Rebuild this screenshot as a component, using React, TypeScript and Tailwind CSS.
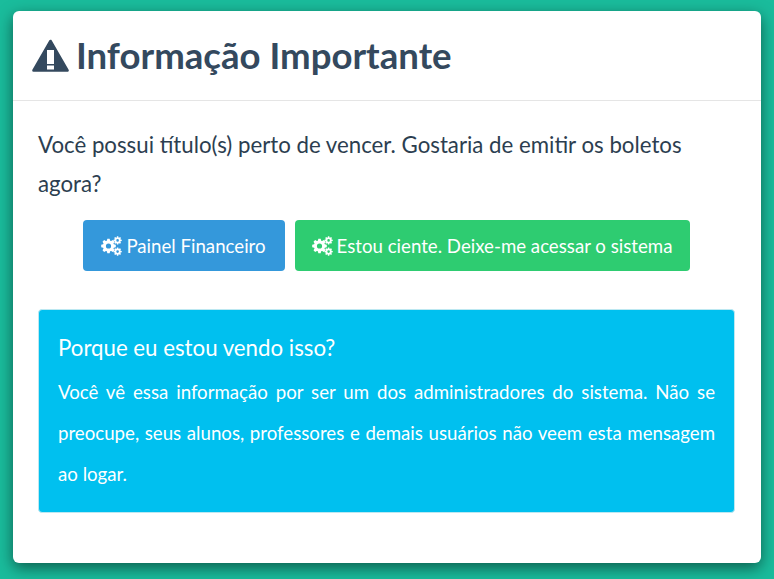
// gear outline with a round hole, drawn on a plain coordinate grid
function gearPath(cx: number, cy: number, outer: number, inner: number, hole: number, teeth: number) {
  const pts: string[] = [];
  const step = (Math.PI * 2) / teeth;
  for (let i = 0; i < teeth; i++) {
    const a = i * step;
    const corners: [number, number][] = [
      [inner, a - step * 0.38],
      [outer, a - step * 0.2],
      [outer, a + step * 0.2],
      [inner, a + step * 0.38],
    ];
    corners.forEach(([r, t]) => pts.push(`${(cx + r * Math.cos(t)).toFixed(2)} ${(cy + r * Math.sin(t)).toFixed(2)}`));
  }
  const ring = `M${cx - hole} ${cy}a${hole} ${hole} 0 1 0 ${hole * 2} 0a${hole} ${hole} 0 1 0 ${-hole * 2} 0Z`;
  return `M${pts.join('L')}Z${ring}`;
}

function Cogs() {
  return (
    <svg viewBox="0 0 21 20" className="h-[20px] w-[21px] shrink-0" fill="currentColor" fillRule="evenodd" aria-hidden="true">
      <path d={gearPath(7.5, 10, 7.4, 5.6, 2.6, 8)} />
      <path d={gearPath(16.6, 4.4, 4.2, 3.1, 1.3, 8)} />
      <path d={gearPath(16.6, 15.6, 4.2, 3.1, 1.3, 8)} />
    </svg>
  );
}

function Warning() {
  return (
    <svg viewBox="0 0 37 33" className="h-[33px] w-[37px] shrink-0" aria-hidden="true">
      <path d="M18.5 2 L35.5 31.5 H1.5 Z" fill="#34495e" stroke="#34495e" strokeWidth="2.6" strokeLinejoin="round" />
      <rect x="15" y="11" width="7" height="14" fill="#fff" />
      <rect x="15" y="26.5" width="7" height="4" fill="#fff" />
    </svg>
  );
}

export default function App() {
  return (
    <div className="h-[579px] overflow-hidden bg-[#1abc9c] px-[13px] pt-[11px] font-['Lato',sans-serif] text-[#2c3e50]">
      <div className="h-[552px] rounded-md bg-white shadow-[0_5px_15px_rgba(0,0,0,0.5)]">
        <div className="flex h-[90px] items-center gap-[7px] border-b border-[#e5e5e5] pb-[1px] pl-[19px]">
          <Warning />
          <h4 className="text-[36.6px] leading-none font-bold text-[#34495e]">Informação Importante</h4>
        </div>
        <div className="pt-[24px] pr-[27px] pl-[25px]">
          <p className="text-[22.25px] leading-[39px]">
            Você possui título(s) perto de vencer. Gostaria de emitir os boletos agora?
          </p>
          <div className="mt-[17px] flex justify-center gap-[10px]">
            <button className="flex h-[51px] w-[202px] items-center justify-center gap-[4px] rounded-[4px] bg-[#3498db] text-[18.67px] text-white">
              <Cogs /> Painel Financeiro
            </button>
            <button className="flex h-[51px] w-[395px] items-center justify-center gap-[4px] rounded-[4px] bg-[#2ecc71] text-[18.67px] text-white">
              <Cogs /> Estou ciente. Deixe-me acessar o sistema
            </button>
          </div>
          <div className="mt-[38px] mr-[-1px] h-[204px] rounded-[4px] border border-[#bce8f1] bg-[#00c0ef] px-[19px] pt-[20px] text-white">
            <h4 className="text-[22.25px] leading-[36px]">Porque eu estou vendo isso?</h4>
            <p className="mt-[6px] text-justify text-[18.67px] leading-[41px]">
              Você vê essa informação por ser um dos administradores do sistema. Não se preocupe, seus alunos, professores e demais usuários não veem esta mensagem ao logar.
            </p>
          </div>
        </div>
      </div>
    </div>
  );
}
